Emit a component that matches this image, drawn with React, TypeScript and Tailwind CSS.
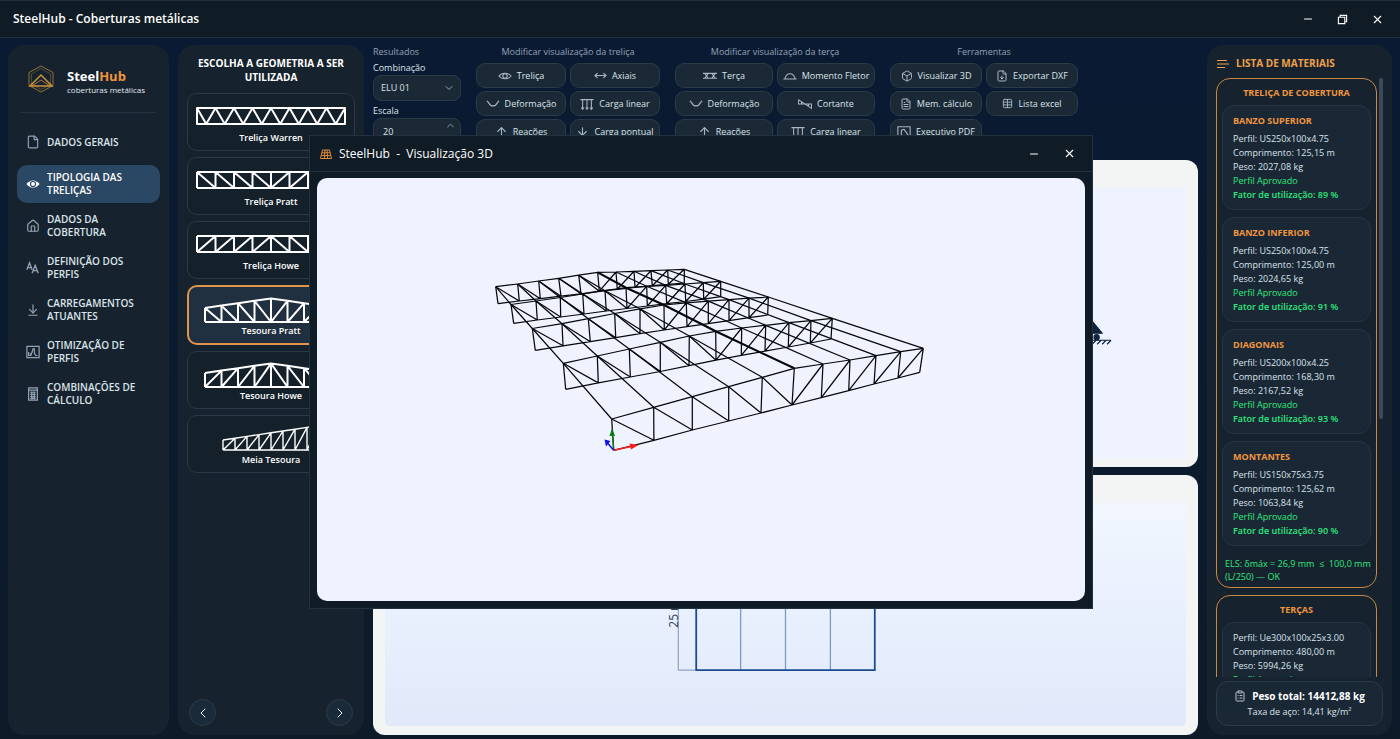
import React from 'react';
import { ArrowDown, ArrowDownToLine, ArrowUp, Box, ChevronDown, ChevronLeft, ChevronRight, ChevronUp, ClipboardList, File, FileDown, FileText, House, Minus, MoveHorizontal, Table, X } from 'lucide-react';
import clsx from 'clsx';

type Point = [number, number];
type Shape = 'warren' | 'pratt' | 'howe' | 'gable-pratt' | 'gable-howe' | 'mono';

const GEOMETRIES: { label: string; shape: Shape }[] = [
    { label: 'Treliça Warren', shape: 'warren' },
    { label: 'Treliça Pratt', shape: 'pratt' },
    { label: 'Treliça Howe', shape: 'howe' },
    { label: 'Tesoura Pratt', shape: 'gable-pratt' },
    { label: 'Tesoura Howe', shape: 'gable-howe' },
    { label: 'Meia Tesoura', shape: 'mono' },
];

const MATERIALS = [
    { name: 'BANZO SUPERIOR', profile: 'US250x100x4.75', length: '125,15 m', weight: '2027,08 kg', usage: '89 %' },
    { name: 'BANZO INFERIOR', profile: 'US250x100x4.75', length: '125,00 m', weight: '2024,65 kg', usage: '91 %' },
    { name: 'DIAGONAIS', profile: 'US200x100x4.25', length: '168,30 m', weight: '2167,52 kg', usage: '93 %' },
    { name: 'MONTANTES', profile: 'US150x75x3.75', length: '125,62 m', weight: '1063,84 kg', usage: '90 %' },
];

// Projected nodes of each frame, front to back
const FRAMES: { top: Point[]; bottom: Point[] }[] = [
    {
        top: [[611.7, 419], [653.7, 407.3], [692.3, 396.7], [728.7, 386.7], [762.3, 377.3], [794.3, 368.3], [823, 364], [850, 360], [876, 355.7], [900.7, 351.7], [923.3, 348.3]],
        bottom: [[613.7, 450.3], [653.9, 440.3], [692.3, 430], [728.7, 421], [761, 413], [792, 405], [821.3, 397.7], [848.7, 390.7], [874, 384], [898, 378], [919.7, 372.3]],
    },
    {
        top: [[563.3, 363.3], [597.3, 356], [629.3, 349], [660.3, 342.3], [689.3, 336], [715.7, 331.3], [741.7, 328], [765.7, 325.3], [789, 322.7], [811, 320.7], [832.3, 318.3]],
        bottom: [[565.7, 389.3], [598.3, 382.9], [630.3, 377], [660.3, 371.5], [689, 365.7], [716, 360.2], [741.3, 355.3], [765, 351.2], [788.3, 347], [810.3, 343], [831, 339]],
    },
    {
        top: [[532.3, 328.5], [562, 323.7], [588.3, 318.7], [614.7, 313.5], [640, 308.8], [664, 305], [686.3, 302.9], [708.3, 301.2], [729, 299.7], [749, 298.2], [768.3, 297]],
        bottom: [[535.3, 350.3], [563, 345.8], [590.3, 341.7], [615.7, 337.7], [640, 333.7], [664.3, 330], [687, 326.6], [708.3, 323.7], [729, 320.7], [749, 317.7], [767.7, 315]],
    },
    {
        top: [[511, 304.5], [536, 301], [560.3, 297.5], [582.7, 294], [605, 290.7], [626, 287.7], [646.7, 286.3], [665.7, 285.3], [685, 284], [703.3, 282.7], [720.7, 281.3]],
        bottom: [[513.7, 323.3], [537.3, 320], [560.7, 317], [584, 314], [606.3, 311], [627, 308.5], [647.3, 306], [666.7, 303.7], [685.7, 301.5], [703.7, 299.2], [720.7, 296.7]],
    },
    {
        top: [[495.7, 286.7], [517.7, 284], [538.7, 281], [558.7, 278.3], [578.7, 275.2], [597.7, 272.3], [616, 272], [634, 271.3], [651, 270.7], [667.7, 270], [684.3, 269.3]],
        bottom: [[498, 303.7], [519.3, 301], [540.3, 298.7], [561, 296.2], [581, 293.8], [599.3, 291.2], [617.3, 289.3], [635, 287.5], [652.3, 285.7], [668.3, 284.3], [684.3, 283]],
    },
];

const polyline = (points: Point[]) => 'M' + points.map((p) => p.join(' ')).join('L');

const framePath = ({ top, bottom }: { top: Point[]; bottom: Point[] }) => {
    let d = polyline(top) + polyline(bottom);
    top.forEach((node, i) => {
        d += polyline([node, bottom[i]]);
        if (i < 5) d += polyline([node, bottom[i + 1]]);
        if (i > 5) d += polyline([node, bottom[i - 1]]);
    });
    return d;
};

const trussPath = (shape: Shape) => {
    const panels = 8;
    if (shape === 'warren') {
        const step = 148 / panels;
        let d = 'M1 7H149V23H1ZM1 7';
        for (let i = 0; i < panels; i++) {
            d += `L${1 + step * (i + 0.5)} 23L${1 + step * (i + 1)} 7`;
        }
        return d;
    }
    const flat = shape === 'pratt' || shape === 'howe';
    const mono = shape === 'mono';
    const left = flat ? 1 : mono ? 27 : 9;
    const step = (150 - left * 2) / panels;
    const base = flat ? 23 : mono ? 27 : 28;
    const top: Point[] = [];
    const bottom: Point[] = [];
    for (let i = 0; i <= panels; i++) {
        const x = left + step * i;
        const rise = flat ? 7 : mono ? 17 - i * 1.8 : 14 - (4 - Math.abs(4 - i)) * 2.4;
        top.push([x, rise]);
        bottom.push([x, base]);
    }
    let d = polyline(top) + polyline(bottom);
    for (let i = 0; i <= panels; i++) {
        d += polyline([top[i], bottom[i]]);
        if (i === panels) break;
        const falling = shape.endsWith('pratt') ? i < 4 : !mono && i >= 4;
        d += falling ? polyline([top[i], bottom[i + 1]]) : polyline([bottom[i], top[i + 1]]);
    }
    return d;
};

const TrussIcon = ({ shape }: { shape: Shape }) => (
    <svg viewBox="0 0 150 29" className="w-[150px] h-[29px] shrink-0" fill="none" stroke="white" strokeWidth={shape === 'mono' ? 1.4 : 2} strokeLinejoin="round">
        <path d={trussPath(shape)} />
    </svg>
);

const Glyph = ({ children, size = 14 }: { children: React.ReactNode; size?: number }) => (
    <svg viewBox="0 0 16 16" width={size} height={size} fill="none" stroke="currentColor" strokeWidth="1.2" className="shrink-0">
        {children}
    </svg>
);

const FlatEyeIcon = () => <Glyph><path d="M1 8C4.500 3.700 11.500 3.700 15 8C11.500 12.300 4.500 12.300 1 8Z" /><circle cx="8" cy="8" r="2.500" /></Glyph>;
const SolidEyeIcon = () => (
    <Glyph>
        <path d="M0.500 8C4.500 2.500 11.500 2.500 15.500 8C11.500 13.500 4.500 13.500 0.500 8Z" fill="currentColor" stroke="none" />
        <circle cx="8" cy="8" r="2.900" stroke="#2a4763" strokeWidth="1.300" />
    </Glyph>
);
const DeflectionIcon = () => <Glyph><path d="M1 4.500L3 6.500C5.500 11.500 10.500 11.500 13 6.500L15 4.500" strokeWidth="1.400" /></Glyph>;
const LineLoadIcon = () => <Glyph><path d="M0.500 3h15M3 3v11M8 3v11M13 3v11M1.500 12L3 14l1.500-2M6.500 12L8 14l1.500-2M11.500 12L13 14l1.500-2" /></Glyph>;
const PurlinIcon = () => <Glyph><path d="M0 5h16M0 10.500h16M2 5l4 5.500M6 5l-4 5.500M10 5l4 5.500M14 5l-4 5.500" /></Glyph>;
const MomentIcon = () => <Glyph><path d="M0.500 11.500h15M2 11.500C4 3.500 12 3.500 14 11.500" /></Glyph>;
const ShearIcon = () => <Glyph><path d="M0.500 3v5h15v5L0.500 3M4 5.500V8M12 8v2.500" /></Glyph>;
const DrawingIcon = () => <Glyph><path d="M1 2h14v12H1zM3 12h2V6l3-1 3 4 2 3" /></Glyph>;
const SizesIcon = () => <Glyph><path d="M1 10L4 2l3 8M2 7.500h4M7 14l3.500-9L14 14M8 11h5" strokeWidth="1.500" /></Glyph>;
const OptimizeIcon = () => <Glyph><path d="M1 1.500h14v13H1zM3 8v4h2.500V9M6 11L8 4.500h1.500V9L11 12h2" strokeWidth="1.400" /></Glyph>;
const CalculatorIcon = () => <Glyph><path d="M3 1h10v14H3zM3 3.500h10M5 6h6M5 8.500h6M5 11h6M5 13h6M6.500 5v9M9.500 5v9" strokeWidth="1.400" /></Glyph>;

const NAV = [
    { label: ['DADOS GERAIS'], icon: <File size={14} /> },
    { label: ['TIPOLOGIA DAS', 'TRELIÇAS'], icon: <SolidEyeIcon />, active: true },
    { label: ['DADOS DA', 'COBERTURA'], icon: <House size={14} /> },
    { label: ['DEFINIÇÃO DOS', 'PERFIS'], icon: <SizesIcon /> },
    { label: ['CARREGAMENTOS', 'ATUANTES'], icon: <ArrowDownToLine size={14} /> },
    { label: ['OTIMIZAÇÃO DE', 'PERFIS'], icon: <OptimizeIcon /> },
    { label: ['COMBINAÇÕES DE', 'CÁLCULO'], icon: <CalculatorIcon /> },
];

const TOOL_GROUPS = [
    {
        title: 'Modificar visualização da treliça',
        columns: 'grid-cols-[90px_90px]',
        tools: [
            { label: 'Treliça', icon: <FlatEyeIcon /> },
            { label: 'Axiais', icon: <MoveHorizontal size={13} /> },
            { label: 'Deformação', icon: <DeflectionIcon /> },
            { label: 'Carga linear', icon: <LineLoadIcon /> },
            { label: 'Reações', icon: <ArrowUp size={13} /> },
            { label: 'Carga pontual', icon: <ArrowDown size={13} /> },
        ],
    },
    {
        title: 'Modificar visualização da terça',
        columns: 'grid-cols-[98px_98px]',
        tools: [
            { label: 'Terça', icon: <PurlinIcon /> },
            { label: 'Momento Fletor', icon: <MomentIcon /> },
            { label: 'Deformação', icon: <DeflectionIcon /> },
            { label: 'Cortante', icon: <ShearIcon /> },
            { label: 'Reações', icon: <ArrowUp size={13} /> },
            { label: 'Carga linear', icon: <LineLoadIcon /> },
        ],
    },
    {
        title: 'Ferramentas',
        columns: 'grid-cols-[92px_92px]',
        tools: [
            { label: 'Visualizar 3D', icon: <Box size={12} /> },
            { label: 'Exportar DXF', icon: <FileDown size={12} /> },
            { label: 'Mem. cálculo', icon: <FileText size={12} /> },
            { label: 'Lista excel', icon: <Table size={11} /> },
            { label: 'Executivo PDF', icon: <DrawingIcon /> },
        ],
    },
];

const TitleBar = () => (
    <header className="flex h-[38px] shrink-0 items-center justify-between border-y border-[#20303a] bg-[#101c25] px-[13px]">
        <h1 className="text-[12px] font-semibold">SteelHub - Coberturas metálicas</h1>
        <div className="flex items-center gap-[23px] pr-[3px]">
            <button aria-label="Minimizar"><Minus size={12} /></button>
            <button aria-label="Restaurar">
                <svg viewBox="0 0 12 12" width="11" height="11" fill="none" stroke="currentColor" strokeWidth="1.200"><path d="M1.500 3.500h7v7h-7zM3.500 3V1.500h7v7H9" /></svg>
            </button>
            <button aria-label="Fechar"><X size={13} /></button>
        </div>
    </header>
);

const Sidebar = () => (
    <aside className="flex w-[161px] shrink-0 flex-col rounded-2xl bg-[#16232e] px-[9px]">
        <div className="mx-1 flex h-[68px] items-center gap-3 border-b border-[#24333f] pl-[6px]">
            <svg viewBox="0 0 28 30" width="28" height="30" fill="none" stroke="#c8913c" className="shrink-0">
                <path d="M14 2L26 8.500V21.500L14 28L2 21.500V8.500Z" strokeWidth="1" opacity="0.700" />
                <path d="M14 4.500L23.500 10V20L14 25.500L4.500 20V10Z" strokeWidth="0.700" opacity="0.500" />
                <path d="M3 22L14 11L25 22Z" strokeWidth="1.500" />
                <path d="M5 22L14 16L23 22" strokeWidth="0.800" />
            </svg>
            <div className="pt-2">
                <p className="text-[13px] font-bold leading-[15px]">Steel<span className="text-[#f0953f]">Hub</span></p>
                <p className="whitespace-nowrap text-[8px] leading-[12px] text-slate-200">coberturas metálicas</p>
            </div>
        </div>
        <nav className="mt-[10px] flex flex-col gap-1">
            {NAV.map((item) => (
                <a
                    key={item.label.join(' ')}
                    href="#"
                    className={clsx(
                        'flex h-[38px] items-center gap-[7px] rounded-[10px] pl-[9px] text-[10px] font-semibold leading-[13px]',
                        item.active ? 'bg-[#2a4763] text-white' : 'text-[#dbe3ea]',
                    )}
                >
                    <span className={item.active ? 'text-white' : 'text-[#94a3b3]'}>{item.icon}</span>
                    <span>{item.label.map((line) => <span key={line} className="block">{line}</span>)}</span>
                </a>
            ))}
        </nav>
    </aside>
);

const Gallery = () => (
    <section className="flex w-[186px] shrink-0 flex-col rounded-2xl bg-[#16232e] px-[9px] pb-[9px] pt-[11px]">
        <h2 className="mb-[9px] text-center text-[10px] font-bold leading-[14px]">ESCOLHA A GEOMETRIA A SER<br />UTILIZADA</h2>
        <div className="flex flex-col gap-[6px]">
            {GEOMETRIES.map(({ label, shape }) => (
                <button
                    key={label}
                    className={clsx(
                        'flex flex-col items-center rounded-[10px] pt-[7px] text-[9px] font-semibold leading-4',
                        shape === 'gable-pratt' ? 'h-[60px] border-2 border-[#e0954a] bg-[#213040]' : 'h-[58px] border border-[#293945] bg-[#14212b]',
                    )}
                >
                    <TrussIcon shape={shape} />
                    {label}
                </button>
            ))}
        </div>
        <div className="mt-auto flex justify-between px-[2px]">
            <button aria-label="Anterior" className="flex size-[27px] items-center justify-center rounded-full border border-[#2b3b49] bg-[#1b2a38]"><ChevronLeft size={16} strokeWidth={1.5} /></button>
            <button aria-label="Próximo" className="flex size-[27px] items-center justify-center rounded-full border border-[#2b3b49] bg-[#1b2a38]"><ChevronRight size={16} strokeWidth={1.5} /></button>
        </div>
    </section>
);

const Toolbar = () => (
    <div className="flex shrink-0 gap-[15px] text-[9px] font-medium text-[#dbe3ea]">
        <div className="w-[88px]">
            <h3 className="leading-[14px] text-[#93a3b5]">Resultados</h3>
            <label htmlFor="combo" className="block pt-[2px] leading-[14px]">Combinação</label>
            <div className="relative">
                <select id="combo" className="block h-[26px] w-full appearance-none rounded-lg border border-[#2a3a46] bg-[#1a2935] px-[7px]">
                    <option>ELU 01</option>
                </select>
                <ChevronDown size={12} className="pointer-events-none absolute right-[6px] top-[7px] text-[#94a3b3]" />
            </div>
            <label htmlFor="scale" className="mt-[3px] block leading-[14px]">Escala</label>
            <div className="relative">
                <input id="scale" type="text" inputMode="numeric" defaultValue="20" className="block h-[26px] w-full rounded-lg border border-[#2a3a46] bg-[#1a2935] px-[9px]" />
                <span className="pointer-events-none absolute right-[5px] top-[2px] text-[#94a3b3]">
                    <ChevronUp size={11} />
                    <ChevronDown size={11} />
                </span>
            </div>
        </div>
        {TOOL_GROUPS.map((group) => (
            <div key={group.title} className="text-center">
                <h3 className="leading-[14px] text-[#93a3b5]">{group.title}</h3>
                <div className={clsx('mt-1 grid gap-x-1 gap-y-[3px]', group.columns)}>
                    {group.tools.map((tool) => (
                        <button
                            key={tool.label}
                            className="flex h-[25px] items-center justify-center gap-[5px] whitespace-nowrap rounded-[9px] border border-[#2a3a46] bg-[#1a2935]"
                        >
                            <span className="text-[#a9b7c4]">{tool.icon}</span>
                            {tool.label}
                        </button>
                    ))}
                </div>
            </div>
        ))}
    </div>
);

const Workspace = () => (
    <main className="flex min-w-0 flex-1 flex-col">
        <Toolbar />
        <div className="mt-4 flex min-h-0 flex-[270] rounded-xl bg-[#f3f4f4] px-3 pb-2 pt-7">
            <svg viewBox="385 189 802 270" className="size-full rounded bg-[#eef3ff]">
                <g fill="#10233f" stroke="#10233f" strokeWidth="1.2">
                    <path d="M1089 317L1103 334H1077Z" />
                    <circle cx="1097.5" cy="338" r="2.600" />
                    <circle cx="1083" cy="338" r="2.600" />
                    <path d="M1072 341H1112M1097 341l-4 4M1102 341l-4 4M1107 341l-4 4M1112 341l-4 4" />
                </g>
            </svg>
        </div>
        <div className="mt-2 flex min-h-0 flex-[223] rounded-xl bg-[#f3f4f4] px-3 pb-[9px] pt-7">
            <svg viewBox="385 503 802 224" className="size-full rounded bg-linear-to-b from-[#f1f6ff] to-[#e1e9fa]">
                <path d="M741 540V671M786 540V671M831 540V671" stroke="#7f9bc5" strokeWidth="1.300" />
                <path d="M678.500 540V670.500H696" fill="none" stroke="#7d93b3" />
                <path d="M696.500 540H875.500V670.500H696.500Z" fill="none" stroke="#1d4b8f" strokeWidth="1.800" />
                <text transform="translate(678 628) rotate(-90)" fontSize="12" fill="#33415a">25 m</text>
            </svg>
        </div>
    </main>
);

const Materials = () => (
    <aside className="flex w-[185px] shrink-0 flex-col rounded-2xl bg-[#16232e] px-[9px] pb-[9px]">
        <h2 className="flex h-[33px] shrink-0 items-center gap-[6px] pt-1 text-[10px] font-bold text-[#f0a04b]">
            <svg viewBox="0 0 14 12" width="14" height="12" stroke="currentColor" strokeWidth="1.100"><path d="M1 2.500h10M1 6h12M1 9.500h8" /></svg>
            LISTA DE MATERIAIS
        </h2>
        <div className="relative min-h-0 flex-1 overflow-hidden pr-[6px] text-[9px] leading-[14px] text-[#dbe3ea]">
            <div className="rounded-[14px] border border-[#c98740] px-[5px] pb-1">
                <h3 className="pb-[5px] pt-[7px] text-center font-bold text-[#f0953f]">TRELIÇA DE COBERTURA</h3>
                <div className="flex flex-col gap-[7px]">
                    {MATERIALS.map((item) => (
                        <div key={item.name} className="rounded-[12px] border border-[#243441] bg-[#1a2836] px-[10px] pb-[7px] pt-2">
                            <h4 className="mb-1 font-bold text-[#f0953f]">{item.name}</h4>
                            <p>Perfil: {item.profile}</p>
                            <p>Comprimento: {item.length}</p>
                            <p>Peso: {item.weight}</p>
                            <p className="text-[#2fe87c]">Perfil Aprovado</p>
                            <p className="font-semibold text-[#2fe87c]">Fator de utilização: {item.usage}</p>
                        </div>
                    ))}
                </div>
                <p className="whitespace-nowrap px-[3px] pt-[11px] leading-[13px] text-[#2fe87c]">ELS: δmáx = 26,9 mm &nbsp;≤ &nbsp;100,0 mm<br />(L/250) — OK</p>
            </div>
            <div className="mt-[7px] rounded-[14px] border border-[#c98740] px-[5px] pb-1">
                <h3 className="pb-[5px] pt-[7px] text-center font-bold text-[#f0953f]">TERÇAS</h3>
                <div className="rounded-[12px] border border-[#243441] bg-[#1a2836] px-[10px] py-2">
                    <p>Perfil: Ue300x100x25x3.00</p>
                    <p>Comprimento: 480,00 m</p>
                    <p>Peso: 5994,26 kg</p>
                    <p className="text-[#2fe87c]">Perfil Aprovado</p>
                </div>
            </div>
            <div className="absolute right-0 top-0 h-[57%] w-1 rounded-full bg-[#3c4a5b]" />
        </div>
        <div className="mt-1 flex h-[45px] shrink-0 flex-col items-center justify-center rounded-[12px] border border-[#293a48] bg-[#1a2836] text-[9px] leading-[15px]">
            <p className="flex items-center gap-[6px] text-[10px] font-bold"><ClipboardList size={12} className="text-[#b4c0cc]" />Peso total: 14412,88 kg</p>
            <p className="text-[#dbe3ea]">Taxa de aço: 14,41 kg/m²</p>
        </div>
    </aside>
);

const Viewer3D = () => (
    <div role="dialog" aria-label="Visualização 3D" className="absolute left-[309px] top-[135px] flex h-[474px] w-[784px] flex-col border border-[#22313b] bg-[#101c25]">
        <div className="flex h-9 items-center border-b border-[#22313b] px-[10px]">
            <svg viewBox="0 0 12 12" width="12" height="12" fill="none" stroke="#e0893a" strokeWidth="1"><path d="M2.500 2h7l2 8.500H.5ZM1.800 4.800h8.400M1.100 7.600h9.800M5 2l-.7 8.500M7 2l.7 8.500" /></svg>
            <h2 className="ml-[7px] whitespace-pre text-[12px]">SteelHub  -  Visualização 3D</h2>
            <div className="ml-auto flex items-center gap-[23px] pr-[6px]">
                <button aria-label="Minimizar"><Minus size={12} /></button>
                <button aria-label="Fechar"><X size={13} /></button>
            </div>
        </div>
        <div className="min-h-0 flex-1 p-[7px] pt-[6px]">
            <svg viewBox="317 178 768 423" className="size-full rounded-[10px] bg-[#eef3ff]" fill="none" stroke="#05070b" strokeWidth="1.250">
                {FRAMES.map((frame, i) => <path key={i} d={framePath(frame)} />)}
                {FRAMES[0].top.map((_, i) => (
                    <path key={i} d={polyline(FRAMES.map((frame) => frame.top[i]))} strokeWidth={i === 5 ? 2.1 : 1.250} />
                ))}
                <path d="M613.700 450.300L612.500 434" stroke="#0a7d12" strokeWidth="1.500" />
                <path d="M612 428L615 436H609.500Z" fill="#0a7d12" stroke="none" />
                <path d="M613.700 450.300L631 446.500" stroke="#ff1a1a" strokeWidth="1.500" />
                <path d="M638.500 445L631 449.500L629.500 443.500Z" fill="#ff1a1a" stroke="none" />
                <path d="M613.700 450.300L608 443.500" stroke="#1212e8" strokeWidth="1.500" />
                <path d="M604.500 439.500L610.500 441L606 446.500Z" fill="#1212e8" stroke="none" />
            </svg>
        </div>
    </div>
);

export default function App() {
    return (
        <div className="relative flex h-screen flex-col overflow-hidden bg-linear-to-b from-[#0a1a33] to-[#0d1b29] font-['Open_Sans','Noto_Sans',sans-serif] text-white">
            <TitleBar />
            <div className="flex min-h-0 flex-1 gap-[9px] px-2 pb-1 pt-[7px]">
                <Sidebar />
                <Gallery />
                <Workspace />
                <Materials />
            </div>
            <Viewer3D />
        </div>
    );
}
